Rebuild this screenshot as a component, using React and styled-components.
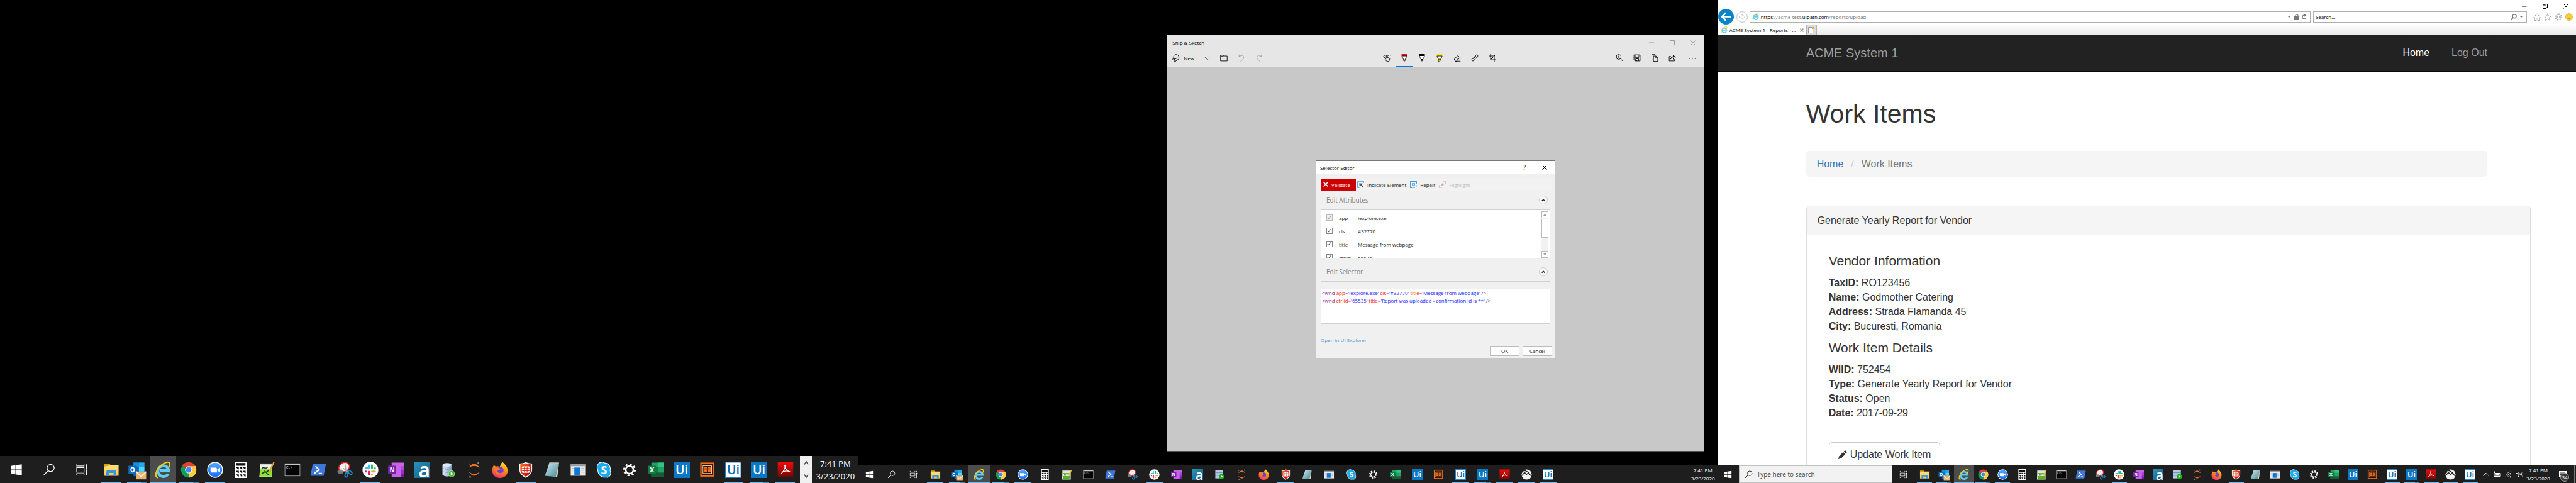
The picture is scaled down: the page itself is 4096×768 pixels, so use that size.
import React from "react";
import styled, { createGlobalStyle, css } from "styled-components";

const UI = '"Open Sans", "Noto Sans", sans-serif';
const WEB = '"Liberation Sans", Arial, sans-serif';

const Global = createGlobalStyle`
  *, *::before, *::after { box-sizing: border-box; }
  body { margin: 0; background: #000; font-family: ${UI}; font-size: 8px; }
  button, input { font: inherit; color: inherit; margin: 0; padding: 0; border: 0; background: none; border-radius: 0; }
  h1, h2, h3, h4, p, ul, dl, dd { margin: 0; padding: 0; font-weight: 400; }
  ul { list-style: none; }
  a { text-decoration: none; }
  svg { display: block; overflow: visible; flex: none; }
`;

/* ---------- shared paint ---------- */

const Hidden = styled.svg`
  position: absolute;
`;

const SharedDefs = () => (
  <Hidden width="0" height="0" aria-hidden="true">
    <defs>
      <linearGradient id="gFire" x1="0.7" y1="0" x2="0.3" y2="1">
        <stop offset="0" stopColor="#ffe226" /><stop offset=".45" stopColor="#ff8a16" /><stop offset="1" stopColor="#f0306c" />
      </linearGradient>
      <linearGradient id="gDb" x1="0" x2="1"><stop offset="0" stopColor="#e3edf8" /><stop offset="1" stopColor="#7f9cc9" /></linearGradient>
      <linearGradient id="gZoom" x1="0" y1="0" x2="0" y2="1"><stop offset="0" stopColor="#4fa8ff" /><stop offset="1" stopColor="#1b6dff" /></linearGradient>
      <linearGradient id="gPdf" x1="0" y1="0" x2="0" y2="1"><stop offset="0" stopColor="#f20a0a" /><stop offset="1" stopColor="#7a0505" /></linearGradient>
      <linearGradient id="gAna" x1="0" y1="0" x2="1" y2="1"><stop offset="0" stopColor="#2b93b8" /><stop offset="1" stopColor="#125a8a" /></linearGradient>
      <linearGradient id="gNote" x1="0" y1="0" x2="1" y2="1"><stop offset="0" stopColor="#d6eef2" /><stop offset="1" stopColor="#3f8594" /></linearGradient>
      <linearGradient id="gFold" x1="0" y1="0" x2="0" y2="1"><stop offset="0" stopColor="#ffdf7e" /><stop offset="1" stopColor="#f8cb49" /></linearGradient>
      <linearGradient id="gShield" x1="0" y1="0" x2="1" y2="1"><stop offset="0" stopColor="#f47a1c" /><stop offset=".5" stopColor="#dd2c12" /><stop offset="1" stopColor="#a80808" /></linearGradient>
    </defs>
  </Hidden>
);

const EIE = (
  <g fill="none">
    <path d="M29.5 27 A12 12 0 1 1 31 19 H11" stroke="#5ccdf6" strokeWidth="6" />
    <path d="M6 35 C-1 32 3 18 13 9 C22 1 33 -2 33 5 C33 8 32 10 31 12" stroke="#f9c80e" strokeWidth="3" strokeLinecap="round" />
  </g>
);

const UiTile = (bg, fg, border) => (
  <g>
    <rect width="36" height="36" fill={border || bg} />
    {border && <rect x="2" y="2" width="32" height="32" fill={bg} />}
    <text x="18" y="28" textAnchor="middle" fontFamily="Open Sans" fontWeight="600" fontSize="27" fill={fg}>Ui</text>
  </g>
);

const pie = (a, b, r) => {
  const p = (d) => `${18 + r * Math.sin((d * Math.PI) / 180)} ${18 - r * Math.cos((d * Math.PI) / 180)}`;
  return `M18 18 L${p(a)} A${r} ${r} 0 0 1 ${p(b)} Z`;
};

const ART = {
  start: <g fill="#fff"><path d="M6 9.5 L16 8 V17.4 H6Z M17.4 7.8 L30 6 V17.4 H17.4Z M6 18.8 H16 V28.2 L6 26.7Z M17.4 18.8 H30 V30.2 L17.4 28.4Z" /></g>,
  search: <g fill="none" stroke="#fff" strokeWidth="1.8"><circle cx="21.5" cy="14" r="7.8" /><path d="M16 20 L6.5 29.5" /></g>,
  searchDark: <g fill="none" stroke="#222" strokeWidth="2"><circle cx="21.5" cy="14" r="7.8" /><path d="M16 20 L6.5 29.5" /></g>,
  tasks: <g fill="none" stroke="#f2f2f2" strokeWidth="1.8"><path d="M7 6 V9.5 H23 V6 M7 30 V26.5 H23 V30 M7 13 H23 V23 H7Z M28.5 6 V11 M28.5 17 V30" /><path d="M26.5 14 H30.5" strokeWidth="3" /></g>,
  folder: <g><path d="M2 5 H14 L17 8 V14 H2Z" fill="#dea10c" /><path d="M2 11 L16 8 H34 V31 H2Z" fill="url(#gFold)" /><path d="M7 32 V22 Q7 19 10 19 H26 Q29 19 29 22 V32 H23 V25 H13 V32Z" fill="#3a95e0" /></g>,
  outlook: <g><path d="M10 2 H34 V32 H10Z" fill="#1066b5" /><path d="M10 2 H22 V12 H10Z" fill="#1490df" /><path d="M22 2 H34 V12 H22Z" fill="#28a8ea" /><path d="M22 12 H34 V22 H22Z" fill="#50d9ff" /><rect x="-1" y="9" width="18" height="18" fill="#0f6cbd" /><ellipse cx="8" cy="18" rx="3.6" ry="4.6" fill="none" stroke="#fff" strokeWidth="2.4" /><rect x="16" y="22" width="22" height="17" fill="#e8b472" /><path d="M16 22 L27 33 L38 22" fill="none" stroke="#fff4e2" strokeWidth="2.2" /></g>,
  ie: EIE,
  chrome: <g><path d={pie(-60, 60, 17)} fill="#db4437" /><path d={pie(60, 180, 17)} fill="#ffcd40" /><path d={pie(180, 300, 17)} fill="#0f9d58" /><path d="M18 10 H32.8 A17 17 0 0 1 18 35 L25 22Z" fill="#ffcd40" /><circle cx="18" cy="18" r="8" fill="#f4f4f4" /><circle cx="18" cy="18" r="6.2" fill="#4a86f0" /></g>,
  zoom: <g><circle cx="18" cy="18" r="17.5" fill="#fff" /><circle cx="18" cy="18" r="15.5" fill="url(#gZoom)" /><path d="M8 13 H19 Q22 13 22 16 V24 H11 Q8 24 8 21Z M23 17 L29 13 V23.5 L23 20Z" fill="#fff" /></g>,
  calc: <g><rect x="5" width="26" height="36" fill="#fff" /><rect x="8" y="3" width="20" height="6" fill="#111" />{[12, 20, 28].map((y) => [8, 15.5, 23].map((x) => <path key={`${x}-${y}`} d={`M${x} ${y} H${x + 5.5} V${y + 5} H${x + 3.5} L${x} ${y + 1}Z`} fill="#111" />))}</g>,
  npp: <g><path d="M4 4 H29 V34 H2Z" fill="#eef2ee" /><path d="M4 4 H29 V6 H4Z" fill="#999" /><path d="M3.4 17 H29 V33 H2.6Z" fill="#8fdc3b" /><path d="M7 15 C12 10 15 18 20 12 M8 27 C12 19 20 27 22 18 M13 20 L22 29" fill="none" stroke="#123a12" strokeWidth="2" /><path d="M34 1 L25 20 L24 25" fill="none" stroke="#e3a51f" strokeWidth="3" /></g>,
  nppSmall: <g><path d="M3 2 H31 V35 H2Z" fill="#dfe6df" /><path d="M3 2 H31 V5 H3Z" fill="#777" /><path d="M4 13 H29 V33 H4Z" fill="#58b21e" /><path d="M6 15 H27 V23 H6Z" fill="#f2f5e8" /><path d="M10 22 V16 H13 V22 M16 19 H20 M22 19 H26" fill="none" stroke="#2b5a18" strokeWidth="1.8" /><path d="M33 3 L24 22" fill="none" stroke="#f0c419" strokeWidth="4" /></g>,
  cmd: <g><rect x="1" y="4" width="34" height="28" fill="#c9c9c9" /><rect x="2" y="7" width="32" height="24" fill="#050505" /><text x="4" y="15" fontFamily="Liberation Mono" fontSize="8" fill="#e8e8e8">C:\_</text></g>,
  ps: <g><path d="M6 5 H35 L30 31 H1Z" fill="#3f78d8" /><path d="M12 10 L20 18 L9 26 M19 26 H26" fill="none" stroke="#fff" strokeWidth="3" /></g>,
  snip: <g><ellipse cx="17" cy="12" rx="12" ry="10" transform="rotate(-25 17 12)" fill="#f3f3f3" stroke="#dd2222" strokeWidth="2.4" /><ellipse cx="9" cy="22" rx="7" ry="5" fill="#8d8d8d" opacity=".8" /><path d="M19 6 L22 24 M14 14 L28 24" stroke="#aaa" strokeWidth="2" /><ellipse cx="22" cy="29" rx="3" ry="5" transform="rotate(20 22 29)" fill="none" stroke="#1c86c7" strokeWidth="2.6" /><ellipse cx="30" cy="24" rx="3" ry="5" transform="rotate(-50 30 24)" fill="none" stroke="#1c86c7" strokeWidth="2.6" /></g>,
  slack: <g><circle cx="18" cy="18" r="17.5" fill="#fff" /><g strokeWidth="4.4" strokeLinecap="round" fill="none"><path d="M14.6 8 V14 M7.6 14.8 H14" stroke="#36c5f0" /><path d="M21.4 8 V14.4 M28 14.8 H27" stroke="#2eb67d" /><path d="M21.4 21.8 H28 M21.4 28.5 V28" stroke="#ecb22e" /><path d="M14.6 21.8 V28.5 M8 21.8 H8.5" stroke="#e01e5a" /></g></g>,
  onenote: <g><rect x="8" y="2" width="28" height="32" rx="1" fill="#c862e8" /><path d="M29 10 H36 V18 H29Z" fill="#ae4bd5" /><path d="M29 18 H36 V26 H29Z" fill="#9332bf" /><path d="M29 26 H36 V34 H29Z" fill="#7719aa" /><rect x="0" y="9" width="18" height="18" fill="#7a1fa8" /><text x="9" y="23" textAnchor="middle" fontFamily="Open Sans" fontWeight="700" fontSize="14" fill="#fff">N</text></g>,
  ana: <g><rect width="36" height="36" fill="url(#gAna)" /><text x="23" y="35" textAnchor="middle" fontFamily="Open Sans" fontWeight="600" fontSize="45" fill="#fff">a</text></g>,
  db: <g><path d="M5 7 V29 Q15 37 25 29 V7Z" fill="url(#gDb)" /><ellipse cx="15" cy="7" rx="10" ry="4" fill="#dde8f5" /><path d="M5 14 Q15 20 25 14 M5 21 Q15 27 25 21" fill="none" stroke="#6d89b8" /><circle cx="25" cy="27" r="7" fill="#3fb71f" stroke="#d6f2cc" /><path d="M23 23 L29 27 L23 31Z" fill="#fff" /></g>,
  dbSmall: <g><path d="M3 3 H29 V31 H3Z" fill="#b7c9e4" /><path d="M3 12 H29 M3 21 H29 M16 3 V31" stroke="#60779f" strokeWidth="1.6" /><circle cx="24" cy="25" r="9" fill="#16b316" /><path d="M21 20 L28.5 25 L21 30Z" fill="#fff" /></g>,
  jupyter: <g><path d="M6 13 Q18 -3 30 13 Q18 6 6 13Z M6 23 Q18 39 30 23 Q18 31 6 23Z" fill="#ee7426" /><circle cx="27" cy="3" r="1.8" fill="#8a8a8a" /><circle cx="8" cy="5" r="1.3" fill="#8a8a8a" /><circle cx="9" cy="34" r="2" fill="#8a8a8a" /></g>,
  firefox: <g><path d="M23 0 C26 4 35 9 35 20 C35 30 27 36 18 36 C9 36 1 30 1 20 C1 14 3 10 5 7 C6 9 7 10 9 11 C13 9 16 11 17 12 C19 9 21 4 23 0Z" fill="url(#gFire)" /><circle cx="18" cy="19" r="8" fill="#6b3fd4" /><path d="M7 14 C13 11 18 14 19 17 C15 18 14 20 12 20 C13 26 20 27 25 23 C22 31 8 30 7 20Z" fill="#ff7a1e" /></g>,
  forti: <g><path d="M18 1 C23 3 28 4 32 4 V18 C32 27 25 32 18 35.5 C11 32 4 27 4 18 V4 C9 4 13 3 18 1Z" fill="#f4f4f4" /><path d="M18 3.6 C22 5 27 6 30 6 V18 C30 25 24 30 18 33 C12 30 6 25 6 18 V6 C9 6 14 5 18 3.6Z" fill="url(#gShield)" /><rect x="9.5" y="10.5" width="17" height="14" rx="2" fill="#fff" /><path d="M10 15 H26 M10 20 H26 M15 11 V24 M21 11 V24" stroke="#d8261a" strokeWidth="1.6" /></g>,
  notepad: <g><path d="M12 2 H33 L29 34 L2 31Z" fill="url(#gNote)" /><path d="M12 2 H33 L32.6 5 H11Z" fill="#b9c3c5" /><path d="M33 4 L29 34 L26 33Z" fill="#e7d9a8" /></g>,
  app: <g><rect x="2" y="6" width="32" height="25" fill="#e9e9e9" /><rect x="2" y="6" width="32" height="4" fill="#9a9a9a" /><rect x="10" y="13" width="13" height="16" fill="#0a76d8" /><path d="M25 15 H32 M25 19 H32 M25 23 H32 M4 15 H8 M4 19 H8" stroke="#a9a9a9" strokeWidth="1.5" /></g>,
  skype: <g><path d="M11 2 C15 0 18 2 19 3 C29 3 34 11 32 20 C36 27 31 36 23 34 C12 36 5 28 5 18 C1 12 5 3 11 2Z" fill="#19aaf0" stroke="#eaf7fe" strokeWidth="1.6" /><text x="18.5" y="27" textAnchor="middle" fontFamily="Open Sans" fontWeight="700" fontSize="25" fill="#fff">S</text></g>,
  gear: <g fill="none" stroke="#fff"><circle cx="18" cy="18" r="8.4" strokeWidth="3.4" /><circle cx="18" cy="18" r="12" strokeWidth="4" strokeDasharray="4.4 5.025" /></g>,
  excel: <g><rect x="8" y="2" width="28" height="32" rx="1" fill="#21a366" /><path d="M22 2 H36 V12 H22Z" fill="#33c481" /><path d="M8 12 H22 V34 H8Z" fill="#107c41" /><path d="M8 24 H36 V34 H8Z" fill="#185c37" /><rect x="0" y="9" width="18" height="18" fill="#107c41" /><text x="9" y="23" textAnchor="middle" fontFamily="Open Sans" fontWeight="700" fontSize="15" fill="#fff">X</text></g>,
  uiBlue: UiTile("#0a78c4", "#fff"),
  uiWhite: UiTile("#fff", "#0a6cb4", "#1a7fc9"),
  orange: <g><rect x="2" y="2" width="31" height="31" fill="#ff6c1a" /><rect x="5" y="5" width="25" height="25" fill="#2a1606" /><path d="M8 9 H27 V26 H8Z" fill="none" stroke="#f2c69d" strokeWidth="1.4" /><path d="M10 11.5 H16.8 V23.5 H10Z M18.2 11.5 H25 V23.5 H18.2Z" fill="#ff6c1a" /><path d="M11 15 H24 M11 18 H24" stroke="#7a340c" strokeWidth=".8" /></g>,
  pdf: <g><rect x="1" y="1" width="34" height="32" fill="url(#gPdf)" /><path d="M16 8 C20 8 15 20 9 26 C14 19 22 20 28 22 C22 22 17 15 16 8Z" fill="none" stroke="#fff" strokeWidth="1.8" /></g>,
  sketch: <g><circle cx="18" cy="18" r="17" fill="#f2f2f2" /><path d="M1.5 22 L11 11 L17 18 L23 13 L34 23" fill="none" stroke="#1e1e1e" strokeWidth="3" /><path d="M7 5 Q21 5 29 17" fill="none" stroke="#1e1e1e" strokeWidth="3" /><path d="M1 8 L9 2 L5 14Z" fill="#1e1e1e" /></g>,
};

const Art = ({ name, size, box = "0 0 36 36" }) => (
  <svg width={size} height={size} viewBox={box} aria-hidden="true">{ART[name]}</svg>
);

/* ---------- desktop ---------- */

const Desktop = styled.div`
  display: grid;
  grid-template-columns: repeat(3, minmax(0, 1fr));
  height: 100vh;
  overflow: hidden;
  background: #000;
`;

const Screen = styled.section`
  display: flex;
  flex-direction: column;
  min-height: 0;
  min-width: 0;
`;

const Stage = styled.div`
  flex: 1;
  min-height: 0;
  overflow: hidden;
  display: flex;
  flex-direction: column;
`;

/* ---------- taskbar ---------- */

const Bar = styled.footer`
  display: flex;
  align-items: stretch;
  height: ${(p) => p.$height}px;
  background: #1e1e1e;
  color: #fff;
`;

const SystemKeys = styled.div`
  display: flex;
  flex: none;
`;

const Apps = styled.ul`
  display: flex;
  flex: ${(p) => (p.$max ? `0 1 ${p.$max}px` : "1")};
  min-width: 0;
`;

const AppSlot = styled.li`
  flex: 1 1 0;
  min-width: 0;
  display: flex;
`;

const AppButton = styled.button`
  flex: 1;
  display: flex;
  align-items: center;
  justify-content: center;
  width: ${(p) => (p.$width ? `${p.$width}px` : "auto")};
  position: relative;
  background: ${(p) => (p.$active ? "#4c4c4c" : "transparent")};
  ${(p) => p.$line && css`
    &::after {
      content: "";
      position: absolute;
      left: ${p.$active ? "0" : "12%"};
      right: ${p.$active ? "0" : "12%"};
      bottom: 0;
      height: 2px;
      background: ${p.$line === "stack"
        ? "linear-gradient(90deg, #76b9ed 70%, #4f86ae 70%)"
        : "#76b9ed"};
    }
  `}
`;

const Clock = styled.time`
  flex: none;
  width: ${(p) => p.$width}px;
  display: flex;
  flex-direction: column;
  justify-content: center;
  text-align: center;
  font-size: ${(p) => (p.$large ? 13 : 8)}px;
  line-height: ${(p) => (p.$large ? 20 : 13)}px;
  white-space: nowrap;
`;

const Scroller = styled.div`
  flex: none;
  width: 19px;
  margin-left: 3px;
  background: #f0f0f0;
  display: flex;
  flex-direction: column;
`;

const ScrollKey = styled.button`
  flex: 1;
  display: flex;
  align-items: center;
  justify-content: center;
`;

const TaskSearch = styled.label`
  flex: none;
  width: 244px;
  display: flex;
  align-items: center;
  gap: 5px;
  padding-left: 6px;
  background: #f2f2f2;
  border: 1px solid #c2c2c2;
  color: #333;
`;

const TaskSearchField = styled.input`
  flex: 1;
  min-width: 0;
  font-size: 10px;
  outline: none;
  &::placeholder { color: #444; opacity: 1; }
`;

const Tray = styled.div`
  flex: none;
  display: flex;
`;

const TrayButton = styled.button`
  width: ${(p) => p.$width || 18}px;
  display: flex;
  align-items: center;
  justify-content: center;
  position: relative;
`;

const Badge = styled.span`
  position: absolute;
  left: 14px;
  top: 12px;
  width: 14px;
  height: 14px;
  border-radius: 50%;
  background: #3a3a3a;
  border: 1px solid #9a9a9a;
  font-size: 8px;
  line-height: 12px;
  text-align: center;
`;

const PeekEdge = styled.div`
  width: 3px;
  border-left: 1px solid #777;
`;

const APPS = [
  ["File Explorer", "folder", "on"], ["Outlook", "outlook", "stack"], ["Internet Explorer", "ie", "active"],
  ["Chrome", "chrome", "stack"], ["Zoom", "zoom", "on"], ["Calculator", "calc"], ["Notepad++", "npp"],
  ["Command Prompt", "cmd"], ["PowerShell", "ps"], ["Snipping Tool", "snip"], ["Slack", "slack", "on"],
  ["OneNote", "onenote"], ["Anaconda", "ana"], ["Database", "db"], ["Jupyter", "jupyter"],
  ["Firefox", "firefox"], ["FortiClient", "forti", "on"], ["Notepad", "notepad"], ["Viewer", "app"],
  ["Skype", "skype"], ["Settings", "gear"], ["Excel", "excel"], ["UiPath", "uiBlue"], ["Reader", "orange"],
  ["UiPath Robot", "uiWhite", "on"], ["UiPath Studio", "uiBlue", "stack"], ["Acrobat", "pdf", "on"],
];
const MORE_APPS = [...APPS, ["Snip & Sketch", "sketch", "on"], ["UiPath Explorer", "uiWhite", "on"]];
const SMALL = { npp: "nppSmall", db: "dbSmall" };

const AppCell = ({ app: [label, art, state], size }) => (
  <AppSlot>
    <AppButton aria-label={label} $active={state === "active"} $line={state}>
      <Art name={size < 20 && SMALL[art] ? SMALL[art] : art} size={size} />
    </AppButton>
  </AppSlot>
);

const KeyCell = ({ label, art, width, size }) => (
  <AppButton aria-label={label} $width={width}><Art name={art} size={size} /></AppButton>
);

const ClockFace = (props) => (
  <Clock {...props}><span>7:41 PM</span><span>3/23/2020</span></Clock>
);

const LeftTaskbar = () => (
  <Bar $height={43}>
    <SystemKeys>
      <KeyCell label="Start" art="start" width={51} size={26} />
      <KeyCell label="Search" art="search" width={52} size={26} />
      <KeyCell label="Task View" art="tasks" width={53} size={26} />
    </SystemKeys>
    <Apps>{APPS.map((a) => <AppCell key={a[0]} app={a} size={26} />)}</Apps>
    <Scroller>
      <ScrollKey aria-label="Scroll up"><svg width="8" height="8" viewBox="0 0 8 8"><path d="M1 6.5 L4 2 L7 6.5" fill="none" stroke="#555" strokeWidth="1.6" /></svg></ScrollKey>
      <ScrollKey aria-label="Scroll down"><svg width="8" height="8" viewBox="0 0 8 8"><path d="M1 1.5 L4 6 L7 1.5" fill="none" stroke="#555" strokeWidth="1.6" /></svg></ScrollKey>
    </Scroller>
    <ClockFace $width={74} $large />
  </Bar>
);

const MiddleBar = styled(Bar)`
  justify-content: space-between;
`;

const MiddleTaskbar = () => (
  <MiddleBar $height={28}>
    <Apps $max={1114}>
      {[["Start", "start"], ["Search", "search"], ["Task View", "tasks"], ...MORE_APPS].map((a) => (
        <AppCell key={a[0]} app={a} size={17} />
      ))}
    </Apps>
    <ClockFace $width={46} />
  </MiddleBar>
);

const RightTaskbar = () => (
  <Bar $height={28}>
    <SystemKeys><KeyCell label="Start" art="start" width={34} size={17} /></SystemKeys>
    <TaskSearch>
      <Art name="searchDark" size={17} />
      <TaskSearchField aria-label="Type here to search" placeholder="Type here to search" />
    </TaskSearch>
    <SystemKeys><KeyCell label="Task View" art="tasks" width={36} size={17} /></SystemKeys>
    <Apps>{MORE_APPS.map((a) => <AppCell key={a[0]} app={a} size={17} />)}</Apps>
    <Tray>
      <TrayButton aria-label="Hidden icons"><svg width="9" height="6" viewBox="0 0 9 6"><path d="M.6 5.4 L4.5 1 L8.4 5.4" fill="none" stroke="#fff" /></svg></TrayButton>
      <TrayButton aria-label="Power"><svg width="12" height="10" viewBox="0 0 12 10" fill="none" stroke="#fff"><path d="M4 3.5 H11 V8.5 H4Z" /><path d="M5 5.5 H9 V7 H5Z" fill="#fff" /><path d="M2.5 .5 V3 M.5 1.5 H4 M2 3 V8.5 H4" /></svg></TrayButton>
      <TrayButton aria-label="Network"><svg width="11" height="11" viewBox="0 0 11 11" fill="none" stroke="#fff"><path d="M1 10 A9 9 0 0 1 10 1" stroke="#aaa" /><path d="M3.4 10 A6.6 6.6 0 0 1 10 3.6 M5.8 10 A4.2 4.2 0 0 1 10 6" /><circle cx="9" cy="9.4" r=".8" fill="#fff" /></svg></TrayButton>
      <TrayButton aria-label="Volume"><svg width="12" height="10" viewBox="0 0 12 10" fill="none" stroke="#fff"><path d="M.5 3.5 H2.5 L5 1 V9 L2.5 6.5 H.5Z M6.8 3.4 Q8 5 6.8 6.6 M8.6 2 Q10.4 5 8.6 8" /><path d="M10.4 1 Q12.8 5 10.4 9" stroke="#777" /></svg></TrayButton>
      <ClockFace $width={42} />
      <TrayButton $width={36} aria-label="Notifications">
        <svg width="13" height="13" viewBox="0 0 13 13"><path d="M0 1 H12 V10 H5 L3 13 V10 H0Z" fill="#fff" /><path d="M2 4 H10 M2 6.5 H10" stroke="#333" /></svg>
        <Badge>34</Badge>
      </TrayButton>
      <PeekEdge />
    </Tray>
  </Bar>
);

/* ---------- Snip & Sketch ---------- */

const WindowStage = styled(Stage)`
  padding: 55px 21px 22px 490px;
`;

const SnipWindow = styled.div`
  flex: 1;
  min-height: 0;
  display: flex;
  flex-direction: column;
  background: #c8c8c8;
  border: 1px solid #333;
  border-bottom-color: #555;
`;

const SnipTitle = styled.header`
  display: flex;
  align-items: center;
  justify-content: space-between;
  height: 23px;
  padding-left: 8px;
  background: #e6e6e6;
  font-size: 8px;
  color: #000;
`;

const SnipTools = styled.div`
  display: grid;
  grid-template-columns: 1fr auto 1fr;
  height: 28px;
  background: #e6e6e6;
`;

const ToolGroup = styled.div`
  display: flex;
  ${(p) => p.$end && css`justify-content: flex-end;`}
  ${(p) => p.$middle && css`padding-left: 14px;`}
`;

const Tool = styled.button`
  width: ${(p) => p.$width || 28}px;
  display: flex;
  align-items: center;
  justify-content: center;
  gap: 6px;
  font-size: 8px;
  border-bottom: 2px solid ${(p) => (p.$active ? "#0078d7" : "transparent")};
  color: #000;
`;

const Canvas = styled.main`
  flex: 1;
  min-height: 0;
  display: flex;
  align-items: center;
  justify-content: center;
`;

const WinKeys = styled.div`
  display: flex;
`;

const WinKey = styled.button`
  width: 33px;
  display: flex;
  align-items: center;
  justify-content: center;
`;

const Glyph = ({ children, size = 12, color = "#000" }) => (
  <svg width={size} height={size} viewBox="0 0 16 16" fill="none" stroke={color} strokeWidth="1.2" aria-hidden="true">{children}</svg>
);

const SnipApp = () => (
  <SnipWindow>
    <SnipTitle>
      <span>Snip &amp; Sketch</span>
      <WinKeys>
        <WinKey aria-label="Minimize"><Glyph size={8} color="#999"><path d="M0 8 H16" strokeWidth="2" /></Glyph></WinKey>
        <WinKey aria-label="Maximize"><Glyph size={8} color="#999"><path d="M1 1 H15 V15 H1Z" strokeWidth="2" /></Glyph></WinKey>
        <WinKey aria-label="Close"><Glyph size={8} color="#999"><path d="M1 1 L15 15 M15 1 L1 15" strokeWidth="1.8" /></Glyph></WinKey>
      </WinKeys>
    </SnipTitle>
    <SnipTools>
      <ToolGroup>
        <Tool $width={51}>
          <Glyph><path d="M4 12 C1 7 3 1 8 1 C13 1 15 6 14 11 L12 13 M5 11 L11 8 M8 14 L13 11" /><circle cx="3" cy="11" r="2" /><circle cx="6" cy="14" r="1.8" /></Glyph>
          New
        </Tool>
        <Tool $width={25} aria-label="New options"><Glyph size={11}><path d="M2 5 L8 11 L14 5" stroke="#444" /></Glyph></Tool>
        <Tool aria-label="Open"><Glyph><path d="M1 2.5 H6 L7.5 4 H15 V14.5 H1Z M1 5 H6 L7.5 4" /></Glyph></Tool>
        <Tool aria-label="Undo"><Glyph color="#999"><path d="M3 1 V5.5 H8 M3 5.5 C8 -1 16 5 11.5 10.5 L6 16" /></Glyph></Tool>
        <Tool aria-label="Redo"><Glyph color="#999"><path d="M13 1 V5.5 H8 M13 5.5 C8 -1 0 5 4.5 10.5 L10 16" /></Glyph></Tool>
      </ToolGroup>
      <ToolGroup $middle>
        <Tool aria-label="Touch writing"><Glyph><path d="M7 9 V2.5 Q8.2 1 9.4 2.5 V7 L13.5 8.4 Q15 9.4 14 12 L12.6 15.5 H8 L4.4 11 Q4.6 9.6 7 10.6 M4 8 C0 6 1 2 4.5 3 M11.5 4 C12 2 14 1 15 3" /></Glyph></Tool>
        <Tool $active aria-label="Ballpoint pen"><Glyph><path d="M2 0 H14 V4 H2Z" fill="#e81818" stroke="none" /><path d="M2.5 4 L6.5 12 V14 H9.5 V12 L13.5 4Z" fill="#fff" /><path d="M6.5 11.5 H9.5 L8.6 16 H7.4Z" fill="#e81818" stroke="none" /></Glyph></Tool>
        <Tool aria-label="Pencil"><Glyph><path d="M2 0 H14 V4 H2Z" fill="#000" stroke="none" /><path d="M2.5 4 L6 11.5 H10 L13.5 4" fill="#fff" /><path d="M5.4 11 H10.6 L8 16Z" fill="#000" stroke="none" /></Glyph></Tool>
        <Tool aria-label="Highlighter"><Glyph><path d="M1.5 0 H14.5 V3.5 H1.5Z" fill="#ffe600" stroke="none" /><path d="M2.5 4 L5 10 V11 H11 V10 L13.5 4Z" fill="#fff" /><path d="M5.4 11 H10.6 V13 L6 16Z" fill="#ffe600" strokeWidth=".8" /></Glyph></Tool>
        <Tool aria-label="Eraser"><Glyph><path d="M2 10.5 L9.5 3 L14 7.5 L6.5 15 H4.5 L2 12.5Z M5 7.5 L10 12 M4 15 H15" /></Glyph></Tool>
        <Tool aria-label="Ruler"><Glyph><path d="M1 12 L12 1 L15 4 L4 15Z M4 9 L5.5 10.5 M6.5 6.5 L8 8 M9 4 L10.5 5.5" /></Glyph></Tool>
        <Tool aria-label="Crop"><Glyph><path d="M4 0 V12 H16 M0 4 H12 V16 M15 1 L4 12" /></Glyph></Tool>
      </ToolGroup>
      <ToolGroup $end>
        <Tool aria-label="Zoom"><Glyph><circle cx="6.5" cy="6" r="5.2" /><path d="M10.4 9.8 L15.5 15.5 M4 6 H9 M6.5 3.5 V8.5" /></Glyph></Tool>
        <Tool aria-label="Save"><Glyph><path d="M1.5 1.5 H14.5 V14.5 H3.5 L1.5 12.5Z M4 1.5 V7 H12 V1.5 M5 14.5 V10 H11.5 V14.5 M7.5 12 V14.5" /></Glyph></Tool>
        <Tool aria-label="Copy"><Glyph><path d="M5 12.5 H2 V1 H8 L9 2 M5.5 4 H11 L14.5 7.5 V15.5 H5.5Z M10.5 4 V8 H14.5" /></Glyph></Tool>
        <Tool aria-label="Share"><Glyph><path d="M5 5 H1.5 V14.5 H12.5 V11 M4 11 C5 7 7 5.5 10 5.5 V2 L15 6.8 L10 11 V8 C7 8 5.5 9 4 11Z" /></Glyph></Tool>
        <Tool $width={36} aria-label="See more"><Glyph><path d="M1 9 H3 M7 9 H9 M13 9 H15" strokeWidth="1.8" /></Glyph></Tool>
      </ToolGroup>
    </SnipTools>
    <Canvas><SelectorEditor /></Canvas>
  </SnipWindow>
);

/* ---------- Selector Editor ---------- */

const Dialog = styled.div`
  width: 381px;
  background: #f0f0f0;
  border-left: 1px solid #777;
  border-top: 1px solid #777;
  color: #222;
  font-size: 8px;
`;

const DialogTitle = styled.header`
  display: flex;
  align-items: center;
  justify-content: space-between;
  height: 21px;
  padding-left: 6px;
  background: #fff;
  border-right: 1px solid #777;
  color: #000;
`;

const TitleKey = styled.button`
  width: 32px;
  height: 20px;
  display: flex;
  align-items: center;
  justify-content: center;
  font-size: 10px;
`;

const DialogBody = styled.div`
  padding: 7px 7px 4px;
`;

const ActionRow = styled.div`
  display: flex;
  height: 19px;
  gap: 3px;
  margin-right: -2px;
  background: #f2f2f2;
`;

const Action = styled.button`
  display: flex;
  align-items: center;
  gap: 5px;
  padding-right: 3px;
  &:disabled { color: #bbb; }
  ${(p) => p.$danger && css`
    background: #cc0000;
    color: #fff;
    padding: 0 9px 0 4px;
    margin-right: -1px;
  `}
`;

const SectionHead = styled.div`
  display: flex;
  align-items: center;
  justify-content: space-between;
  height: 14px;
  margin: ${(p) => (p.$first ? 8 : 14)}px 5px 8px 9px;
`;

const SectionName = styled.h2`
  font-size: 10px;
  color: #808080;
`;

const Fold = styled.button`
  width: 14px;
  height: 14px;
  border: 1px solid #ccc;
  border-radius: 50%;
  background: #f8f8f8;
  display: flex;
  align-items: center;
  justify-content: center;
`;

const AttributeBox = styled.div`
  height: 78px;
  display: flex;
  background: #fff;
  border: 1px solid #d0d0d0;
  margin-right: 1px;
  padding: 2px 2px 0;
  overflow: hidden;
`;

const AttributeList = styled.ul`
  flex: 1;
  overflow: hidden;
`;

const Attribute = styled.li`
  label {
    display: grid;
    grid-template-columns: 20px 30px 1fr;
    align-items: center;
    height: 21px;
    padding-left: 6px;
  }
`;

const Tick = styled.input`
  appearance: none;
  width: 10px;
  height: 10px;
  border: 1px solid #888;
  background: #fff;
  display: flex;
  justify-content: center;
  &::after {
    content: "";
    width: 3px;
    height: 6px;
    border: solid #555;
    border-width: 0 1px 1px 0;
    transform: rotate(40deg);
  }
  &:disabled { border-color: #bbb; background: #eee; }
  &:disabled::after { border-color: #999; }
`;

const Rail = styled.div`
  width: 11px;
  display: flex;
  flex-direction: column;
  background: #f2f2f2;
`;

const RailKey = styled.button`
  height: 11px;
  border: 1px solid #bbb;
  background: #fff;
  display: flex;
  align-items: center;
  justify-content: center;
`;

const RailThumb = styled.div`
  height: 30px;
  margin: 1px 0 auto;
  border: 1px solid #bbb;
  background: #fff;
`;

const SelectorFrame = styled.div`
  border: 1px solid #d0d0d0;
  margin-right: 1px;
  background: #fff;
  height: 68px;
`;

const SelectorGap = styled.div`
  height: 12px;
  background: #f0f0f0;
`;

const SelectorText = styled.div`
  height: 54px;
  padding: 0 1px;
  line-height: 12px;
  white-space: nowrap;
  outline: none;
`;

const Mark = styled.span`color: #8c288c;`;
const Attr = styled.span`color: #ff1a1a;`;
const Val = styled.span`color: #1f1fff;`;

const ExplorerLink = styled.a`
  display: block;
  width: fit-content;
  margin-top: 20px;
  line-height: 11px;
  color: #5b9bd5;
`;

const DialogButtons = styled.div`
  display: flex;
  justify-content: flex-end;
  gap: 5px;
  margin-top: 4px;
  margin-right: -2px;
`;

const DialogButton = styled.button`
  width: 47px;
  height: 16px;
  border: 1px solid #bbb;
  background: #fff;
`;

const FoldKey = ({ label }) => (
  <Fold aria-label={label}><svg width="6" height="4" viewBox="0 0 6 4"><path d="M.6 3.6 L3 1.2 L5.4 3.6" fill="none" stroke="#222" strokeWidth="1.5" /></svg></Fold>
);

const TagLine = ({ attrs }) => (
  <div>
    <Mark>&lt;wnd</Mark>
    {attrs.map(([k, v]) => (
      <React.Fragment key={k}> <Attr>{k}</Attr><Mark>=</Mark><Val>'{v}'</Val></React.Fragment>
    ))}
    <Mark> /&gt;</Mark>
  </div>
);

function SelectorEditor() {
  return (
    <Dialog role="dialog" aria-label="Selector Editor">
      <DialogTitle>
        <span>Selector Editor</span>
        <WinKeys>
          <TitleKey aria-label="Help">?</TitleKey>
          <TitleKey aria-label="Close"><Glyph size={8}><path d="M1 1 L15 15 M15 1 L1 15" strokeWidth="2" /></Glyph></TitleKey>
        </WinKeys>
      </DialogTitle>
      <DialogBody>
        <ActionRow>
          <Action $danger><Glyph size={8} color="#fff"><path d="M1 1 L15 15 M15 1 L1 15" strokeWidth="3.4" /></Glyph>Validate</Action>
          <Action><Glyph size={11} color="#3f9bd8"><path d="M5 15 H1 V1 H15 V4" strokeWidth="1.6" /><path d="M4.5 5 L13 5.6 L10.4 8 L15 13 L13 15 L8.6 10 L6 13Z" fill="#555" stroke="none" /></Glyph>Indicate Element</Action>
          <Action><Glyph size={11} color="#3f9bd8"><path d="M5 15 H1 V1 H15 V6" strokeWidth="1.8" /><path d="M5.5 5.5 H10.5 V10.5 H5.5Z" strokeWidth="1.8" /><path d="M7 15 H15 V8" strokeDasharray="1.5 1.5" /></Glyph>Repair</Action>
          <Action disabled><Glyph size={11} color="#f3b5bd"><path d="M9 1.5 H15 V7 M1 9 V14.5 H7" strokeWidth="2.4" /><circle cx="8" cy="8" r="3" fill="#bbb" stroke="none" /></Glyph>Highlight</Action>
        </ActionRow>
        <SectionHead $first><SectionName>Edit Attributes</SectionName><FoldKey label="Collapse attributes" /></SectionHead>
        <AttributeBox>
          <AttributeList>
            {[["app", "iexplore.exe"], ["cls", "#32770"], ["title", "Message from webpage"], ["ctrlid", "65535"]].map(([k, v], i) => (
              <Attribute key={k}>
                <label><Tick type="checkbox" defaultChecked disabled={i === 0} /><span>{k}</span><span>{v}</span></label>
              </Attribute>
            ))}
          </AttributeList>
          <Rail>
            <RailKey aria-label="Scroll up"><svg width="5" height="3" viewBox="0 0 5 3"><path d="M0 3 L2.5 0 L5 3Z" fill="#999" /></svg></RailKey>
            <RailThumb />
            <RailKey aria-label="Scroll down"><svg width="5" height="3" viewBox="0 0 5 3"><path d="M0 0 L2.5 3 L5 0Z" fill="#999" /></svg></RailKey>
          </Rail>
        </AttributeBox>
        <SectionHead><SectionName>Edit Selector</SectionName><FoldKey label="Collapse selector" /></SectionHead>
        <SelectorFrame>
          <SelectorGap />
          <SelectorText role="textbox" aria-multiline="true" aria-label="Selector" tabIndex={0}>
            <TagLine attrs={[["app", "iexplore.exe"], ["cls", "#32770"], ["title", "Message from webpage"]]} />
            <TagLine attrs={[["ctrlid", "65535"], ["title", "Report was uploaded - confirmation id is **"]]} />
          </SelectorText>
        </SelectorFrame>
        <ExplorerLink href="#explorer">Open in UI Explorer</ExplorerLink>
        <DialogButtons><DialogButton>OK</DialogButton><DialogButton>Cancel</DialogButton></DialogButtons>
      </DialogBody>
    </Dialog>
  );
}

/* ---------- Internet Explorer ---------- */

const Browser = styled(Stage)`
  background: #fff;
  color: #333;
`;

const BrowserTop = styled.div`
  display: flex;
  justify-content: flex-end;
  align-items: flex-end;
  height: 14px;
  flex: none;
`;

const AddressRow = styled.div`
  flex: none;
  display: flex;
  align-items: center;
  height: 25px;
  padding: 0 3px 0 1px;
`;

const NavKey = styled.button`
  display: flex;
  margin-right: ${(p) => p.$gap}px;
`;

const Field = styled.div`
  display: flex;
  align-items: center;
  height: 18px;
  border: 1px solid #b0b0b0;
  background: #fff;
  padding: 0 4px 0 3px;
  margin-right: ${(p) => p.$gap}px;
  color: #777;
  min-width: 0;
  flex: ${(p) => p.$grow} 1 0;
  gap: 3px;
`;

const Url = styled.div`
  flex: 1;
  min-width: 0;
  font-size: 8px;
  color: #777;
  b { font-weight: 400; color: #000; }
`;

const SearchField = styled.input`
  flex: 1;
  min-width: 0;
  font-size: 8px;
  outline: none;
  &::placeholder { color: #000; opacity: 1; }
`;

const FieldKey = styled.button`
  display: flex;
  justify-content: center;
  width: ${(p) => p.$width || 9}px;
`;

const Corner = styled.div`
  display: flex;
`;

const CornerKey = styled.button`
  width: 17px;
  display: flex;
  justify-content: center;
`;

const TabRow = styled.div`
  flex: none;
  display: flex;
  height: 16px;
  background: linear-gradient(#fff, #ebebeb);
`;

const Tab = styled.div`
  display: flex;
  align-items: center;
  width: 142px;
  gap: 3px;
  padding: 0 4px;
  border: 1px solid #b0b0b0;
  border-width: 1px 1px 0;
  background: #fff;
  font-size: 8px;
  color: #000;
  white-space: nowrap;
`;

const TabName = styled.span`
  flex: 1;
`;

const NewTab = styled.button`
  width: 16px;
  border: 1px solid #b0b0b0;
  border-width: 1px 1px 0 0;
  background: #dcdcdc;
  display: flex;
  align-items: center;
  justify-content: center;
`;

const SiteNav = styled.nav`
  flex: none;
  display: flex;
  align-items: center;
  justify-content: space-between;
  height: 60px;
  padding: 0 141px;
  background: #222;
  border-bottom: 2px solid #080808;
  font-family: ${WEB};
`;

const Brand = styled.a`
  font-size: 20px;
  color: #9d9d9d;
`;

const NavLinks = styled.div`
  display: flex;
  gap: 35px;
`;

const NavLink = styled.a`
  font-size: 16px;
  color: ${(p) => (p.$current ? "#fff" : "#9d9d9d")};
`;

const Page = styled.main`
  padding: 44px 141px 0;
  font-family: ${WEB};
  font-size: 16px;
  line-height: 23px;
  color: #333;
`;

const PageTitle = styled.h1`
  font-size: 41px;
  line-height: 45px;
  padding-bottom: 10px;
  border-bottom: 1px solid #eee;
`;

const Crumbs = styled.nav`
  display: flex;
  gap: 12px;
  margin-top: 25px;
  padding: 9px 17px;
  border-radius: 5px;
  background: #f5f5f5;
  color: #777;
  a { color: #337ab7; }
`;

const Slash = styled.span`
  color: #ccc;
`;

const Panel = styled.section`
  margin: 46px -69px 0 0;
  border: 1px solid #ddd;
  border-radius: 5px;
`;

const PanelHead = styled.header`
  padding: 11px 17px;
  background: #f5f5f5;
  border-bottom: 1px solid #ddd;
  border-radius: 4px 4px 0 0;
`;

const PanelBody = styled.div`
  padding: 29px 35px;
`;

const GroupName = styled.h4`
  font-size: 21px;
  line-height: 23px;
  margin-bottom: 12px;
`;

const Facts = styled.ul`
  margin-bottom: ${(p) => (p.$last ? 35 : 11)}px;
  b { font-weight: 700; }
`;

const UpdateButton = styled.button`
  display: flex;
  align-items: center;
  gap: 5px;
  height: 39px;
  padding: 0 14px;
  border: 1px solid #ccc;
  border-radius: 5px;
  background: #fff;
`;

const FactGroup = ({ name, rows, last }) => (
  <>
    <GroupName>{name}</GroupName>
    <Facts $last={last}>{rows.map(([k, v]) => <li key={k}><b>{k}:</b> {v}</li>)}</Facts>
  </>
);

const AcmeBrowser = () => (
  <Browser>
    <BrowserTop>
      <WinKey aria-label="Minimize"><Glyph size={8}><path d="M0 8 H15" strokeWidth="2" /></Glyph></WinKey>
      <WinKey aria-label="Restore"><Glyph size={8}><path d="M1 4 H11 V15 H1Z M4 4 V1 H15 V12 H11" strokeWidth="2" /></Glyph></WinKey>
      <WinKey aria-label="Close"><Glyph size={8}><path d="M1 1 L15 15 M15 1 L1 15" strokeWidth="2" /></Glyph></WinKey>
    </BrowserTop>
    <AddressRow>
      <NavKey aria-label="Back" $gap={4}><svg width="25" height="25" viewBox="0 0 25 25"><circle cx="12.5" cy="12.5" r="12.5" fill="#0a84c8" /><path d="M6 12.5 H20 M12 6.5 L6 12.5 L12 18.5" fill="none" stroke="#fff" strokeWidth="2.6" /></svg></NavKey>
      <NavKey aria-label="Forward" $gap={3}><svg width="18" height="18" viewBox="0 0 18 18" fill="none" stroke="#c4c4c4"><circle cx="9" cy="9" r="8.4" fill="#fff" /><path d="M4.5 7.6 H9 V4.8 L13.6 9 L9 13.2 V10.4 H4.5Z" /></svg></NavKey>
      <Field $grow={883} $gap={4}>
        <Art name="ie" size={11} />
        <Url role="textbox" aria-label="Address" tabIndex={0}><b>https</b>://acme-test.<b>uipath.com</b>/reports/upload</Url>
        <FieldKey aria-label="Show addresses"><svg width="6" height="3" viewBox="0 0 6 3"><path d="M0 0 H6 L3 3Z" fill="#777" /></svg></FieldKey>
        <FieldKey aria-label="Security"><svg width="8" height="10" viewBox="0 0 8 10"><path d="M0 4 H8 V10 H0Z" fill="#777" /><path d="M2 4 V2.4 Q4 -.6 6 2.4 V4" fill="none" stroke="#777" strokeWidth="1.2" /></svg></FieldKey>
        <FieldKey aria-label="Refresh"><svg width="8" height="9" viewBox="0 0 8 9"><path d="M6.6 6.6 A3 3 0 1 1 5.6 2.6" fill="none" stroke="#777" strokeWidth="1.5" /><path d="M4.4 0 L7.6 3 L4 4.4Z" fill="#777" /></svg></FieldKey>
      </Field>
      <Field $grow={331} $gap={7}>
        <SearchField aria-label="Search" placeholder="Search..." />
        <FieldKey aria-label="Search"><svg width="10" height="10" viewBox="0 0 10 10"><circle cx="6" cy="3.8" r="3" fill="none" stroke="#777" strokeWidth="1.5" /><path d="M4 6 L.6 9.6" stroke="#777" strokeWidth="1.8" /></svg></FieldKey>
        <FieldKey aria-label="Providers"><svg width="6" height="3" viewBox="0 0 6 3"><path d="M0 0 H6 L3 3Z" fill="#777" /></svg></FieldKey>
      </Field>
      <Corner>
        <CornerKey aria-label="Home"><Glyph color="#999"><path d="M1 8.5 L8 1 L15 8.5 L13 9 V15.5 H9.6 V10 H6.4 V15.5 H3 V9Z" /></Glyph></CornerKey>
        <CornerKey aria-label="Favorites"><Glyph color="#999"><path d="M8 .6 L10 6 L15.6 6 L11.2 9.6 L12.8 15.4 L8 12 L3.2 15.4 L4.8 9.6 L.4 6 L6 6Z" /></Glyph></CornerKey>
        <CornerKey aria-label="Tools"><Glyph color="#aaa"><circle cx="8" cy="8" r="2.4" /><circle cx="8" cy="8" r="5.2" /><circle cx="8" cy="8" r="6.8" strokeWidth="2" strokeDasharray="2.67 2.67" /></Glyph></CornerKey>
        <CornerKey aria-label="Feedback"><Glyph><circle cx="8" cy="8" r="7.4" fill="#fbd131" stroke="#b9a04a" strokeWidth=".8" /><path d="M5.8 4 V7 M10.2 4 V7 M5 11 Q8 13.6 11 11" stroke="#6b5a1c" /></Glyph></CornerKey>
      </Corner>
    </AddressRow>
    <TabRow>
      <Tab>
        <Art name="ie" size={11} />
        <TabName>ACME System 1 - Reports - ...</TabName>
        <FieldKey $width={6} aria-label="Close tab"><svg width="6" height="6" viewBox="0 0 6 6"><path d="M.5 .5 L5.5 5.5 M5.5 .5 L.5 5.5" stroke="#999" strokeWidth="1.5" /></svg></FieldKey>
      </Tab>
      <NewTab aria-label="New tab"><svg width="10" height="11" viewBox="0 0 10 11"><path d="M.5 1.5 H7.5 V10.5 H.5Z" fill="#fff" stroke="#999" /><path d="M7.5 0 V5 M5 2.5 H10 M6 1 L9 4 M9 1 L6 4" stroke="#f5a623" /></svg></NewTab>
    </TabRow>
    <SiteNav>
      <Brand href="#acme">ACME System 1</Brand>
      <NavLinks><NavLink href="#home" $current>Home</NavLink><NavLink href="#logout">Log Out</NavLink></NavLinks>
    </SiteNav>
    <Page>
      <PageTitle>Work Items</PageTitle>
      <Crumbs><a href="#home">Home</a><Slash>/</Slash><span>Work Items</span></Crumbs>
      <Panel>
        <PanelHead>Generate Yearly Report for Vendor</PanelHead>
        <PanelBody>
          <FactGroup name="Vendor Information" rows={[["TaxID", "RO123456"], ["Name", "Godmother Catering"], ["Address", "Strada Flamanda 45"], ["City", "Bucuresti, Romania"]]} />
          <FactGroup last name="Work Item Details" rows={[["WIID", "752454"], ["Type", "Generate Yearly Report for Vendor"], ["Status", "Open"], ["Date", "2017-09-29"]]} />
          <UpdateButton>
            <svg width="14" height="14" viewBox="0 0 14 14" aria-hidden="true"><path d="M9.6 1 Q11 -.4 12.4 1 L13.2 1.8 Q14.4 3 13 4.4 L12 5.4 L8.6 2Z M7.8 2.8 L11.2 6.2 L4.6 12.8 L0 14 L1.2 9.4Z" fill="#333" /></svg>
            Update Work Item
          </UpdateButton>
        </PanelBody>
      </Panel>
    </Page>
  </Browser>
);

export default function App() {
  return (
    <>
      <Global />
      <SharedDefs />
      <Desktop>
        <Screen><Stage /><LeftTaskbar /></Screen>
        <Screen><WindowStage><SnipApp /></WindowStage><MiddleTaskbar /></Screen>
        <Screen><AcmeBrowser /><RightTaskbar /></Screen>
      </Desktop>
    </>
  );
}
